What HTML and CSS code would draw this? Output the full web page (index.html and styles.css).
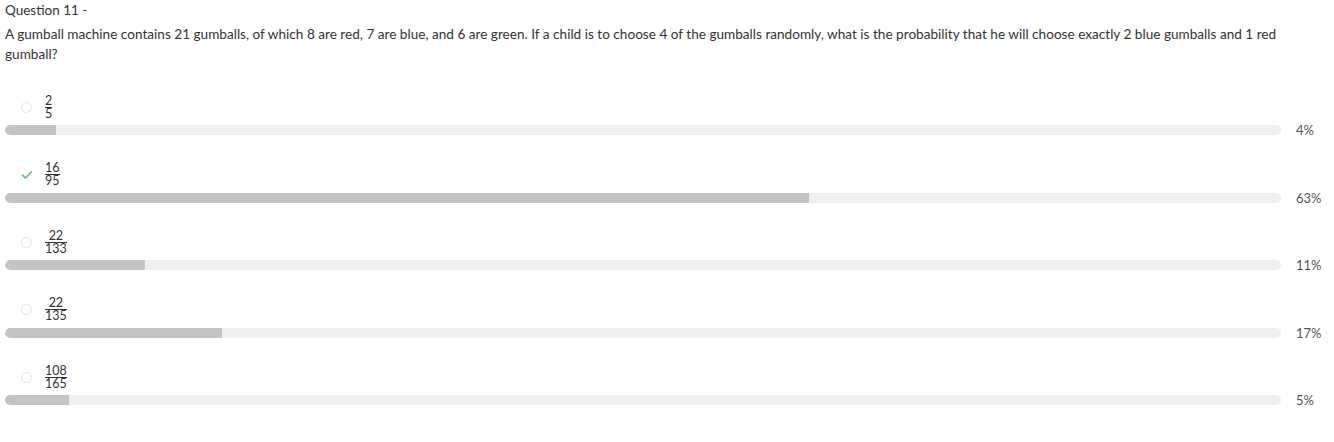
FILE: index.html
```html
<!DOCTYPE html>
<html>
<head>
<meta charset="utf-8">
<link rel="stylesheet" href="styles.css">
</head>
<body>
<div class="page">
  <div class="title">Question 11 -</div>
  <div class="question">A gumball machine contains 21 gumballs, of which 8 are red, 7 are blue, and 6 are green. If a child is to choose 4 of the gumballs randomly, what is the probability that he will choose exactly 2 blue gumballs and 1 red gumball?</div>
  <div class="options">
    <div class="option">
      <div class="answer"><span class="radio"></span><span class="frac"><span class="num">2</span><span class="den">5</span></span></div>
      <div class="stat"><div class="track"><div class="fill" style="width:4%"></div></div><span class="pct">4%</span></div>
    </div>
    <div class="option">
      <div class="answer"><span class="mark"><svg width="12" height="10" viewBox="0 0 12 10"><path d="M1.5 5.2 L4.5 8 L10.5 1.8" fill="none" stroke="#5cc06c" stroke-width="1.6" stroke-linecap="round" stroke-linejoin="round"/></svg></span><span class="frac"><span class="num">16</span><span class="den">95</span></span></div>
      <div class="stat"><div class="track"><div class="fill" style="width:63%"></div></div><span class="pct">63%</span></div>
    </div>
    <div class="option">
      <div class="answer"><span class="radio"></span><span class="frac"><span class="num">22</span><span class="den">133</span></span></div>
      <div class="stat"><div class="track"><div class="fill" style="width:11%"></div></div><span class="pct">11%</span></div>
    </div>
    <div class="option">
      <div class="answer"><span class="radio"></span><span class="frac"><span class="num">22</span><span class="den">135</span></span></div>
      <div class="stat"><div class="track"><div class="fill" style="width:17%"></div></div><span class="pct">17%</span></div>
    </div>
    <div class="option">
      <div class="answer"><span class="radio"></span><span class="frac"><span class="num">108</span><span class="den">165</span></span></div>
      <div class="stat"><div class="track"><div class="fill" style="width:5%"></div></div><span class="pct">5%</span></div>
    </div>
  </div>
</div>
</body>
</html>
```
FILE: styles.css
```css
html, body {
  margin: 0;
  padding: 0;
  background: #ffffff;
}
body {
  font-family: Lato, "Open Sans", "Liberation Sans", sans-serif;
  color: #333333;
}
.page {
  padding: 0 0 0 5px;
}
.title {
  font-size: 13.5px;
  line-height: 20px;
}
.question {
  margin-top: 4px;
  font-size: 13.6px;
  line-height: 20px;
  padding-right: 20px;
}
.options {
  margin-top: 28px;
  display: flex;
  flex-direction: column;
}
.option {
  display: flex;
  flex-direction: column;
  margin-bottom: 24.6px;
}
.answer {
  height: 30px;
  display: flex;
  align-items: center;
  padding-left: 16px;
}
.radio {
  width: 11px;
  height: 11px;
  box-sizing: border-box;
  border: 1px solid #e4e4e4;
  border-radius: 50%;
  margin-right: 13px;
  flex: none;
}
.mark {
  width: 12px;
  height: 10px;
  margin-right: 12px;
  display: flex;
  flex: none;
}
.frac {
  display: inline-flex;
  flex-direction: column;
  align-items: center;
  font-size: 12.5px;
  line-height: 10px;
  color: #333;
}
.num {
  border-bottom: 1px solid #333;
  align-self: stretch;
  text-align: center;
  padding-bottom: 1px;
}
.den {
  padding-top: 1px;
}
.stat {
  margin-top: 3px;
  height: 10px;
  display: flex;
  align-items: center;
}
.track {
  flex: 1;
  height: 10px;
  background: #efefef;
  border-radius: 5px;
  overflow: hidden;
}
.fill {
  height: 100%;
  background: #c4c4c4;
  border-radius: 5px 0 0 5px;
}
.pct {
  width: 38px;
  margin-left: 15px;
  font-size: 13px;
  line-height: 12px;
  color: #555555;
  flex: none;
}
```
